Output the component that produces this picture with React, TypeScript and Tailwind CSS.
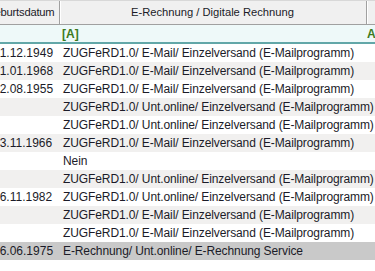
const rows: { date: string; value: string }[] = [
  { date: "01.12.1949", value: "ZUGFeRD1.0/ E-Mail/ Einzelversand (E-Mailprogramm)" },
  { date: "01.01.1968", value: "ZUGFeRD1.0/ E-Mail/ Einzelversand (E-Mailprogramm)" },
  { date: "22.08.1955", value: "ZUGFeRD1.0/ E-Mail/ Einzelversand (E-Mailprogramm)" },
  { date: "", value: "ZUGFeRD1.0/ Unt.online/ Einzelversand (E-Mailprogramm)" },
  { date: "", value: "ZUGFeRD1.0/ Unt.online/ Einzelversand (E-Mailprogramm)" },
  { date: "23.11.1966", value: "ZUGFeRD1.0/ E-Mail/ Einzelversand (E-Mailprogramm)" },
  { date: "", value: "Nein" },
  { date: "", value: "ZUGFeRD1.0/ Unt.online/ Einzelversand (E-Mailprogramm)" },
  { date: "26.11.1982", value: "ZUGFeRD1.0/ Unt.online/ Einzelversand (E-Mailprogramm)" },
  { date: "", value: "ZUGFeRD1.0/ E-Mail/ Einzelversand (E-Mailprogramm)" },
  { date: "", value: "ZUGFeRD1.0/ E-Mail/ Einzelversand (E-Mailprogramm)" },
  { date: "16.06.1975", value: "E-Rechnung/ Unt.online/ E-Rechnung Service" },
];

export default function App() {
  return (
    <div
      className="w-[375px] h-[271px] overflow-hidden bg-white text-[12px] text-[#1b1b28]"
      style={{ fontFamily: '"Liberation Sans", Arial, sans-serif' }}
    >
      {/* header */}
      <div className="flex h-[25px] border-t border-b border-t-[#d8d8d8] border-b-[#a0a0a0] bg-[#f0f0f0] text-[11.2px]">
        <div className="w-[60px] shrink-0 overflow-hidden border-r border-[#a0a0a0] flex items-center">
          <span className="whitespace-nowrap -ml-[14px] tracking-[-0.2px]">Geburtsdatum</span>
        </div>
        <div className="w-[307px] shrink-0 border-l border-white border-r border-r-[#a0a0a0] flex items-center justify-center pr-[2px]">
          E-Rechnung / Digitale Rechnung
        </div>
        <div className="flex-1 border-l border-white" />
      </div>

      {/* filter row */}
      <div className="flex h-[19px] bg-[#eef9f9] border-b-2 border-[#62a7a8]">
        <div className="w-[60px] shrink-0" />
        <div className="w-[307px] shrink-0 flex items-center pl-[2px] pt-[1px]">
          <span className="font-bold text-[#3d7a1e]">[A]</span>
        </div>
        <div className="flex-1 flex items-center pt-[1px]">
          <span className="font-bold text-[#3d7a1e]">A</span>
        </div>
      </div>

      {/* data */}
      {rows.map((r, i) => {
        const selected = i === rows.length - 1;
        const bg = selected ? "bg-[#c9c9c9]" : i % 2 === 1 ? "bg-[#f1f0ef]" : "bg-white";
        return (
          <div key={i} className={`flex h-[18px] items-center ${bg}`}>
            <div className="w-[60px] shrink-0 overflow-hidden">
              <span className="whitespace-nowrap block -ml-[7px]">{r.date}</span>
            </div>
            <div className="flex-1 whitespace-nowrap pl-[3px] tracking-[-0.1px]">{r.value}</div>
          </div>
        );
      })}
    </div>
  );
}
